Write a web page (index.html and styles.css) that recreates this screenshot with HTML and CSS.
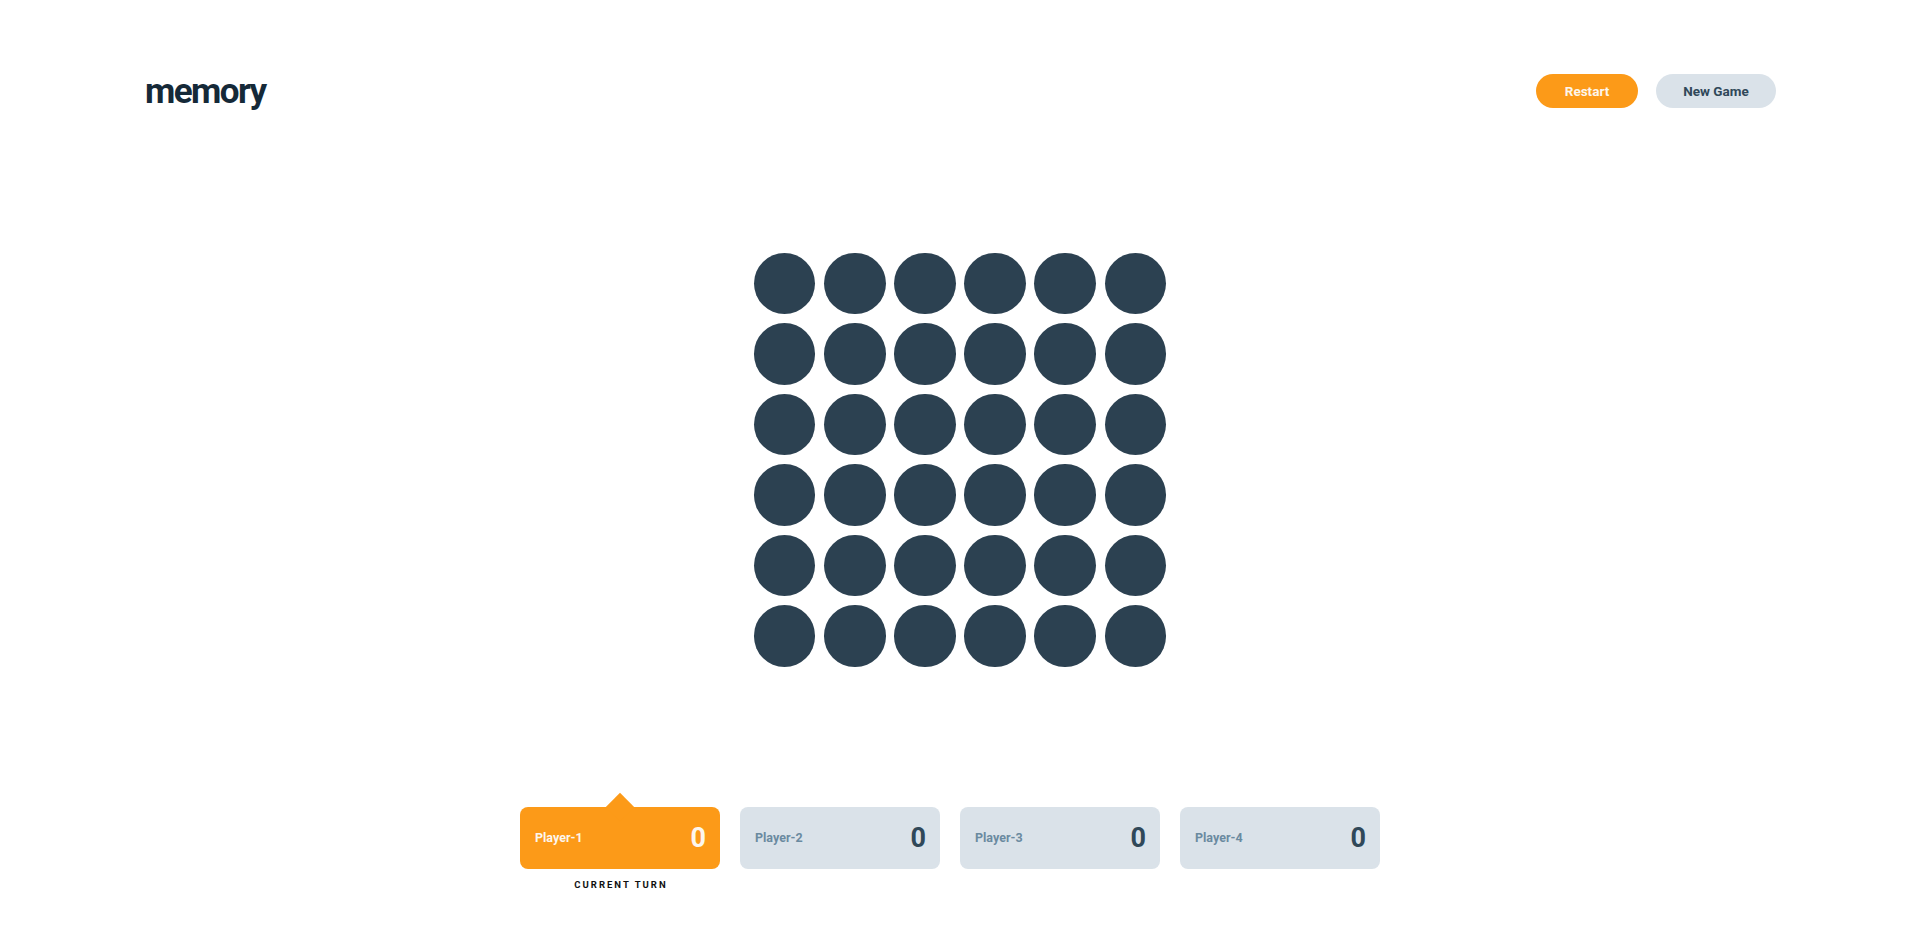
FILE: index.html
```html
<!DOCTYPE html>
<html lang="en">
<head>
<meta charset="utf-8">
<title>memory</title>
<link rel="stylesheet" href="styles.css">
</head>
<body>
<div class="page">
  <header class="header">
    <h1 class="logo">memory</h1>
    <div class="actions">
      <button class="btn btn-primary">Restart</button>
      <button class="btn btn-secondary">New Game</button>
    </div>
  </header>
  <main class="board">
    <div class="grid">
      <div class="cell"></div><div class="cell"></div><div class="cell"></div><div class="cell"></div><div class="cell"></div><div class="cell"></div>
      <div class="cell"></div><div class="cell"></div><div class="cell"></div><div class="cell"></div><div class="cell"></div><div class="cell"></div>
      <div class="cell"></div><div class="cell"></div><div class="cell"></div><div class="cell"></div><div class="cell"></div><div class="cell"></div>
      <div class="cell"></div><div class="cell"></div><div class="cell"></div><div class="cell"></div><div class="cell"></div><div class="cell"></div>
      <div class="cell"></div><div class="cell"></div><div class="cell"></div><div class="cell"></div><div class="cell"></div><div class="cell"></div>
      <div class="cell"></div><div class="cell"></div><div class="cell"></div><div class="cell"></div><div class="cell"></div><div class="cell"></div>
    </div>
  </main>
  <footer class="players">
    <div class="player-wrap">
      <div class="player active">
        <span class="arrow"></span>
        <span class="name">Player-1</span>
        <span class="score">0</span>
      </div>
      <div class="turn">CURRENT TURN</div>
    </div>
    <div class="player-wrap">
      <div class="player">
        <span class="name">Player-2</span>
        <span class="score">0</span>
      </div>
    </div>
    <div class="player-wrap">
      <div class="player">
        <span class="name">Player-3</span>
        <span class="score">0</span>
      </div>
    </div>
    <div class="player-wrap">
      <div class="player">
        <span class="name">Player-4</span>
        <span class="score">0</span>
      </div>
    </div>
  </footer>
</div>
</body>
</html>
```
FILE: styles.css
```css
* { box-sizing: border-box; }
html, body {
  margin: 0;
  padding: 0;
  background: #ffffff;
  font-family: Roboto, "Liberation Sans", Arial, sans-serif;
}
.page {
  width: 1919px;
  height: 938px;
  overflow: hidden;
}
.header {
  display: flex;
  align-items: center;
  justify-content: space-between;
  padding: 74px 143px 0 145px;
  height: 108px;
}
.logo {
  margin: 0;
  font-size: 35px;
  font-weight: 700;
  letter-spacing: -1.6px;
  color: #152938;
  line-height: 34px;
  position: relative;
  top: 1px;
}
.actions {
  display: flex;
  gap: 18px;
}
.btn {
  border: none;
  height: 34px;
  border-radius: 17px;
  font-family: Roboto, "Liberation Sans", Arial, sans-serif;
  font-weight: 700;
  font-size: 13.5px;
  padding: 0;
  cursor: pointer;
}
.btn-primary {
  width: 102px;
  background: #fc9a18;
  color: #fdf6ec;
}
.btn-secondary {
  width: 120px;
  background: #dae2e9;
  color: #304859;
}
.board {
  display: flex;
  justify-content: center;
  padding-top: 145px;
}
.grid {
  display: grid;
  grid-template-columns: repeat(6, 61.3px);
  grid-auto-rows: 61.3px;
  column-gap: 8.8px;
  row-gap: 9.2px;
  padding-left: 1px;
}
.cell {
  border-radius: 50%;
  background: #2c4151;
}
.players {
  display: flex;
  justify-content: center;
  align-items: flex-start;
  gap: 20px;
  padding-top: 140px;
  padding-right: 19px;
}
.player-wrap {
  display: flex;
  flex-direction: column;
  align-items: center;
  width: 200px;
}
.player {
  position: relative;
  width: 200px;
  height: 62px;
  border-radius: 8px;
  background: #dae2e9;
  display: flex;
  align-items: center;
  justify-content: space-between;
  padding: 0 14px 0 15px;
}
.player .name {
  font-size: 12.5px;
  font-weight: 700;
  color: #6a8aa0;
  position: relative;
  z-index: 1;
}
.player .score {
  font-size: 27px;
  font-weight: 700;
  color: #304859;
  position: relative;
  z-index: 1;
}
.player.active {
  background: #fc9a18;
}
.player.active .name,
.player.active .score {
  color: #fcf6ee;
}
.arrow {
  position: absolute;
  top: -10px;
  left: 90px;
  width: 20px;
  height: 20px;
  background: #fc9a18;
  transform: rotate(45deg);
}
.turn {
  margin-top: 10px;
  font-size: 9.5px;
  font-weight: 700;
  letter-spacing: 2px;
  color: #111111;
  padding-left: 2px;
}
```
